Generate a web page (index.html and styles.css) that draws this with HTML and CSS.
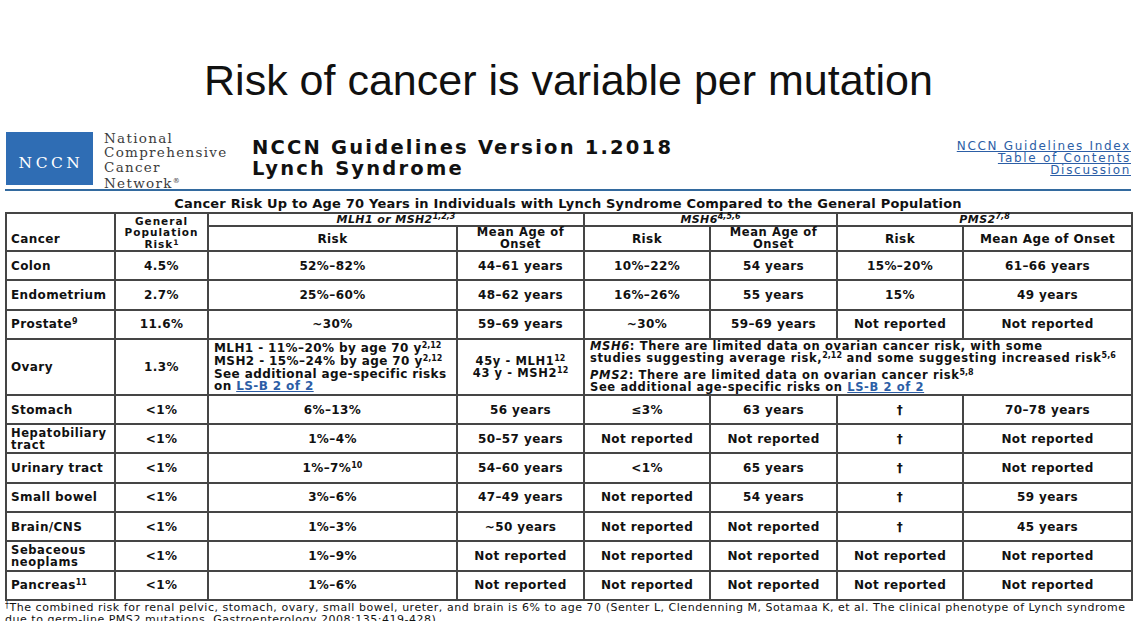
FILE: index.html
```html
<!DOCTYPE html>
<html lang="en">
<head>
<meta charset="utf-8">
<title>Risk of cancer is variable per mutation</title>
<link rel="stylesheet" href="styles.css">
</head>
<body>
<div class="slide">
  <h1 class="slide-title">Risk of cancer is variable per mutation</h1>
  <div class="doc">
    <div class="doc-head">
      <div class="logo-box">NCCN</div>
      <div class="logo-text">
        <div>National</div>
        <div>Comprehensive</div>
        <div>Cancer</div>
        <div>Network<span class="reg">®</span></div>
      </div>
      <div class="doc-title">
        <div>NCCN Guidelines Version 1.2018</div>
        <div>Lynch Syndrome</div>
      </div>
      <div class="doc-links">
        <a href="#">NCCN Guidelines Index</a>
        <a href="#">Table of Contents</a>
        <a href="#">Discussion</a>
      </div>
    </div>
    <div class="rule"></div>
    <div class="caption">Cancer Risk Up to Age 70 Years in Individuals with Lynch Syndrome Compared to the General Population</div>
    <table class="risk">
      <colgroup>
        <col class="c-cancer"><col class="c-gen"><col class="c-mlh-risk"><col class="c-mlh-age">
        <col class="c-msh-risk"><col class="c-msh-age"><col class="c-pms-risk"><col class="c-pms-age">
      </colgroup>
      <thead>
        <tr class="h1row">
          <th rowspan="2" class="left bottom">Cancer</th>
          <th rowspan="2" class="gen"><div>General</div><div>Population</div><div>Risk<sup>1</sup></div></th>
          <th colspan="2" class="gene"><i>MLH1</i> or <i>MSH2</i><sup>1,2,3</sup></th>
          <th colspan="2" class="gene"><i>MSH6</i><sup>4,5,6</sup></th>
          <th colspan="2" class="gene"><i>PMS2</i><sup>7,8</sup></th>
        </tr>
        <tr class="h2row">
          <th>Risk</th>
          <th class="two">Mean Age of Onset</th>
          <th>Risk</th>
          <th class="two">Mean Age of Onset</th>
          <th>Risk</th>
          <th>Mean Age of Onset</th>
        </tr>
      </thead>
      <tbody>
        <tr><td class="left">Colon</td><td>4.5%</td><td>52%–82%</td><td>44–61 years</td><td>10%–22%</td><td>54 years</td><td>15%–20%</td><td>61–66 years</td></tr>
        <tr><td class="left">Endometrium</td><td>2.7%</td><td>25%–60%</td><td>48–62 years</td><td>16%–26%</td><td>55 years</td><td>15%</td><td>49 years</td></tr>
        <tr><td class="left">Prostate<sup>9</sup></td><td>11.6%</td><td>~30%</td><td>59–69 years</td><td>~30%</td><td>59–69 years</td><td>Not reported</td><td>Not reported</td></tr>
        <tr class="ovary">
          <td class="left">Ovary</td>
          <td>1.3%</td>
          <td class="left ov-mlh">
            <div>MLH1 - 11%–20% by age 70 y<sup>2,12</sup></div>
            <div>MSH2 - 15%–24% by age 70 y<sup>2,12</sup></div>
            <div class="tight">See additional age-specific risks<br>on <a href="#">LS-B 2 of 2</a></div>
          </td>
          <td class="ov-age">45y - MLH1<sup>12</sup><br>43 y - MSH2<sup>12</sup></td>
          <td colspan="4" class="left ov-note">
            <p><i>MSH6</i>: There are limited data on ovarian cancer risk, with some<br>studies suggesting average risk,<sup>2,12</sup> and some suggesting increased risk<sup>5,6</sup></p>
            <p><i>PMS2</i>: There are limited data on ovarian cancer risk<sup>5,8</sup><br>See additional age-specific risks on <a href="#">LS-B 2 of 2</a></p>
          </td>
        </tr>
        <tr><td class="left">Stomach</td><td>&lt;1%</td><td>6%–13%</td><td>56 years</td><td>≤3%</td><td>63 years</td><td>†</td><td>70–78 years</td></tr>
        <tr><td class="left two-body">Hepatobiliary<br>tract</td><td>&lt;1%</td><td>1%–4%</td><td>50–57 years</td><td>Not reported</td><td>Not reported</td><td>†</td><td>Not reported</td></tr>
        <tr><td class="left">Urinary tract</td><td>&lt;1%</td><td>1%–7%<sup>10</sup></td><td>54–60 years</td><td>&lt;1%</td><td>65 years</td><td>†</td><td>Not reported</td></tr>
        <tr><td class="left">Small bowel</td><td>&lt;1%</td><td>3%–6%</td><td>47–49 years</td><td>Not reported</td><td>54 years</td><td>†</td><td>59 years</td></tr>
        <tr><td class="left">Brain/CNS</td><td>&lt;1%</td><td>1%–3%</td><td>~50 years</td><td>Not reported</td><td>Not reported</td><td>†</td><td>45 years</td></tr>
        <tr><td class="left two-body">Sebaceous<br>neoplams</td><td>&lt;1%</td><td>1%–9%</td><td>Not reported</td><td>Not reported</td><td>Not reported</td><td>Not reported</td><td>Not reported</td></tr>
        <tr><td class="left">Pancreas<sup>11</sup></td><td>&lt;1%</td><td>1%–6%</td><td>Not reported</td><td>Not reported</td><td>Not reported</td><td>Not reported</td><td>Not reported</td></tr>
      </tbody>
    </table>
    <div class="footnote">
      <div class="fn-line"><sup>†</sup>The combined risk for renal pelvic, stomach, ovary, small bowel, ureter, and brain is 6% to age 70 (Senter L, Clendenning M, Sotamaa K, et al. The clinical phenotype of Lynch syndrome</div>
      <div class="fn-line">due to germ-line PMS2 mutations. Gastroenterology 2008;135:419-428).</div>
    </div>
  </div>
</div>
</body>
</html>
```

FILE: styles.css
```css
* { box-sizing: border-box; }

body {
  margin: 0;
  background: #ffffff;
  font-family: "Liberation Sans", Arial, sans-serif;
  color: #111111;
}

.slide {
  width: 1137px;
  height: 640px;
  overflow: hidden;
  background: #ffffff;
}

.slide-title {
  margin: 56px 0 0;
  height: 48px;
  font-size: 43px;
  line-height: 48px;
  font-weight: normal;
  text-align: center;
  color: #111111;
}

.doc {
  margin: 26px 6px 0 5px;
}

.doc-head {
  display: flex;
  align-items: flex-start;
  height: 57px;
}

.logo-box {
  flex: 0 0 87px;
  height: 53px;
  margin-top: 2px;
  margin-left: 1px;
  background: #2f6db4;
  color: #ffffff;
  display: flex;
  align-items: center;
  justify-content: center;
  padding-top: 9px;
  font-family: "DejaVu Serif", "Liberation Serif", serif;
  font-size: 15.5px;
  letter-spacing: 3.5px;
  text-indent: 3px;
}

.logo-text {
  flex: 0 0 148px;
  margin-left: 11px;
  margin-top: 1px;
  font-family: "DejaVu Serif", "Liberation Serif", serif;
  font-size: 13.5px;
  line-height: 14.3px;
  letter-spacing: 1.3px;
  color: #3c3c3c;
}

.logo-text .reg {
  font-size: 7px;
  vertical-align: 5px;
  letter-spacing: 0;
}

.doc-title {
  margin-top: 7px;
  font-family: "DejaVu Sans", sans-serif;
  font-weight: bold;
  font-size: 19.5px;
  line-height: 21px;
  letter-spacing: 2.2px;
  color: #111111;
}

.doc-links {
  margin-left: auto;
  margin-top: 10px;
  text-align: right;
  font-family: "DejaVu Sans", sans-serif;
  font-size: 12px;
  line-height: 12px;
  letter-spacing: 1.7px;
}

.doc-links a {
  display: block;
  color: #2c5ea6;
  text-decoration: underline;
}

.rule {
  height: 2px;
  margin-top: 2px;
  background: #336a9f;
}

.caption {
  padding-top: 5px;
  height: 21px;
  line-height: 16px;
  text-align: center;
  font-family: "DejaVu Sans", sans-serif;
  font-weight: bold;
  font-size: 13px;
  letter-spacing: 0.2px;
  color: #111111;
}

.risk {
  width: 1126px;
  border-collapse: collapse;
  table-layout: fixed;
  font-family: "DejaVu Sans", sans-serif;
  font-weight: bold;
  font-size: 12px;
  letter-spacing: 0.4px;
  color: #111111;
}

.c-cancer { width: 109px; }
.c-gen { width: 93px; }
.c-mlh-risk { width: 249px; }
.c-mlh-age { width: 127px; }
.c-msh-risk { width: 126px; }
.c-msh-age { width: 127px; }
.c-pms-risk { width: 126px; }
.c-pms-age { width: 169px; }

.risk th,
.risk td {
  border: 2px solid #454545;
  padding: 0 4px;
  text-align: center;
  vertical-align: middle;
  font-weight: bold;
  line-height: 14px;
}

.risk .left { text-align: left; }
.risk .bottom { vertical-align: bottom; padding-bottom: 4px; }

.risk .two {
  font-size: 11.5px;
  line-height: 11.5px;
  letter-spacing: 0.6px;
}

.risk .two-body {
  font-size: 11.5px;
  line-height: 12px;
  letter-spacing: 0.6px;
}

.risk .gen {
  font-size: 10.5px;
  line-height: 12px;
  letter-spacing: 1px;
  padding: 0 2px;
}

.risk .gen div { height: 11.5px; }

.h1row { height: 13px; }
.h1row .gene {
  font-size: 11px;
  line-height: 11px;
  font-style: italic;
  padding: 0;
}
.h2row { height: 24px; }

.risk tbody tr { height: 29.3px; }

.risk sup {
  font-size: 8px;
  line-height: 0;
  vertical-align: 4px;
  letter-spacing: 0;
}

.risk .gen sup { font-size: 7.5px; vertical-align: 3px; }

.risk a {
  color: #2c5ea6;
  text-decoration: underline;
}

.risk tr.ovary { height: 56px; }

.risk .ov-mlh {
  padding-left: 5px;
  line-height: 13px;
}
.risk .ov-mlh .tight { line-height: 12px; }

.risk .ov-age {
  font-size: 11.5px;
  line-height: 12px;
  letter-spacing: 0.6px;
}

.risk .ov-note {
  vertical-align: top;
  padding: 0 5px;
  font-size: 11.5px;
  line-height: 12px;
  letter-spacing: 0.62px;
}

.risk .ov-note p { margin: 0; }
.risk .ov-note p + p { margin-top: 5px; }

.footnote {
  height: 20px;
  overflow: hidden;
  padding-top: 1px;
  font-family: "DejaVu Sans", sans-serif;
  font-size: 11px;
  line-height: 12px;
  letter-spacing: 0.52px;
  color: #111111;
}

.fn-line { white-space: nowrap; }

.footnote sup {
  font-size: 8px;
  vertical-align: 3px;
  line-height: 0;
}
```
